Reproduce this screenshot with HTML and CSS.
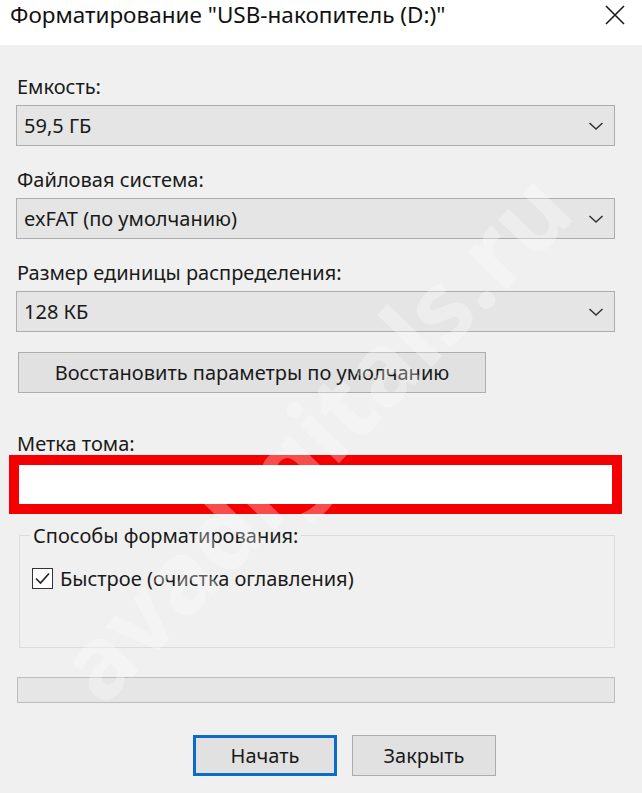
FILE: index.html
```html
<!DOCTYPE html>
<html lang="ru">
<head>
<meta charset="utf-8">
<title>Форматирование</title>
<link rel="stylesheet" href="styles.css">
</head>
<body>
<div class="window">
  <div class="titlebar">
    <span class="title">Форматирование "USB-накопитель (D:)"</span>
    <svg class="close" width="22" height="22" viewBox="0 0 22 22"><path d="M2 2 L20 20 M20 2 L2 20" stroke="#1a1a1a" stroke-width="1.6" fill="none"/></svg>
  </div>
  <div class="content">
    <div class="field">
      <div class="label">Емкость:</div>
      <div class="select"><span>59,5 ГБ</span><svg class="chev" width="16" height="10" viewBox="0 0 16 10"><path d="M1.5 2 L8 8 L14.5 2" stroke="#333" stroke-width="1.5" fill="none"/></svg></div>
    </div>
    <div class="field">
      <div class="label">Файловая система:</div>
      <div class="select"><span>exFAT (по умолчанию)</span><svg class="chev" width="16" height="10" viewBox="0 0 16 10"><path d="M1.5 2 L8 8 L14.5 2" stroke="#333" stroke-width="1.5" fill="none"/></svg></div>
    </div>
    <div class="field">
      <div class="label">Размер единицы распределения:</div>
      <div class="select"><span>128 КБ</span><svg class="chev" width="16" height="10" viewBox="0 0 16 10"><path d="M1.5 2 L8 8 L14.5 2" stroke="#333" stroke-width="1.5" fill="none"/></svg></div>
    </div>
    <div class="btn restore">Восстановить параметры по умолчанию</div>
    <div class="label vol-label">Метка тома:</div>
    <div class="red-frame"><div class="textbox"></div></div>
    <fieldset class="group">
      <legend>Способы форматирования:</legend>
      <div class="check-row">
        <svg class="checkbox" width="21" height="21" viewBox="0 0 21 21"><rect x="0.5" y="0.5" width="20" height="20" fill="#fff" stroke="#333"/><path d="M4 10.5 L8.5 15 L17 5.5" stroke="#222" stroke-width="1.6" fill="none"/></svg>
        <span>Быстрое (очистка оглавления)</span>
      </div>
    </fieldset>
    <div class="progress"></div>
    <div class="actions">
      <div class="btn primary">Начать</div>
      <div class="btn">Закрыть</div>
    </div>
  </div>
  <div class="watermark">avadigitals.ru</div>
</div>
</body>
</html>
```
FILE: styles.css
```css
* { box-sizing: border-box; }
html, body { margin: 0; padding: 0; }
body {
  width: 642px;
  height: 793px;
  overflow: hidden;
  background: #f0f0f0;
  font-family: "Noto Sans", "Open Sans", sans-serif;
  font-size: 20px;
  color: #1a1a1a;
}
.window { position: relative; width: 642px; height: 793px; overflow: hidden; }
.titlebar {
  height: 45px;
  background: #fff;
  display: flex;
  align-items: flex-start;
  justify-content: space-between;
  padding: 0 16px 0 10px;
}
.title { font-size: 22.5px; line-height: 30px; color: #111; }
.close { margin-top: 4px; }
.content { padding: 28px 27px 0 16px; }
.field { margin-bottom: 20px; }
.label { line-height: 28px; height: 28px; margin-bottom: 4px; padding-left: 1px; }
.select {
  height: 41px;
  border: 1px solid #adadad;
  background: #e5e5e5;
  display: flex;
  align-items: center;
  justify-content: space-between;
  padding: 0 10px 0 7px;
}
.btn {
  height: 41px;
  border: 1px solid #adadad;
  background: #e1e1e1;
  display: flex;
  align-items: center;
  justify-content: center;
}
.restore { width: 468px; margin-left: 2px; margin-top: 4px; }
.vol-label { margin-top: 37px; margin-bottom: 0; height: 25px; }
.red-frame {
  margin-left: -7px;
  margin-right: -7px;
  height: 59px;
  border: 10px solid #f50000;
  background: #fff;
}
.textbox { height: 100%; }
.group {
  margin: 8px 0 0 3px;
  height: 126px;
  border: 1px solid #dcdcdc;
  padding: 4px 12px 0 10px;
}
.group legend { padding: 0 3px; margin-left: 0; }
.check-row { display: flex; align-items: center; gap: 7px; margin-top: 12px; margin-left: 2px; }
.checkbox { flex: none; }
.progress {
  margin: 29px 0 0 1px;
  height: 26px;
  border: 1px solid #bcbcbc;
  background: #e6e6e6;
}
.actions { display: flex; gap: 15px; margin: 32px 0 0 177px; }
.actions .btn { width: 144px; }
.actions .primary { border: 3px solid #0a6bc9; }
.watermark {
  position: absolute;
  left: 312px;
  top: 435px;
  transform: translate(-50%, -50%) rotate(-46deg);
  font-family: "Noto Sans", sans-serif;
  font-weight: 700;
  font-size: 100px;
  line-height: 1;
  color: rgba(255, 255, 255, 0.3);
  white-space: nowrap;
  pointer-events: none;
}
```
